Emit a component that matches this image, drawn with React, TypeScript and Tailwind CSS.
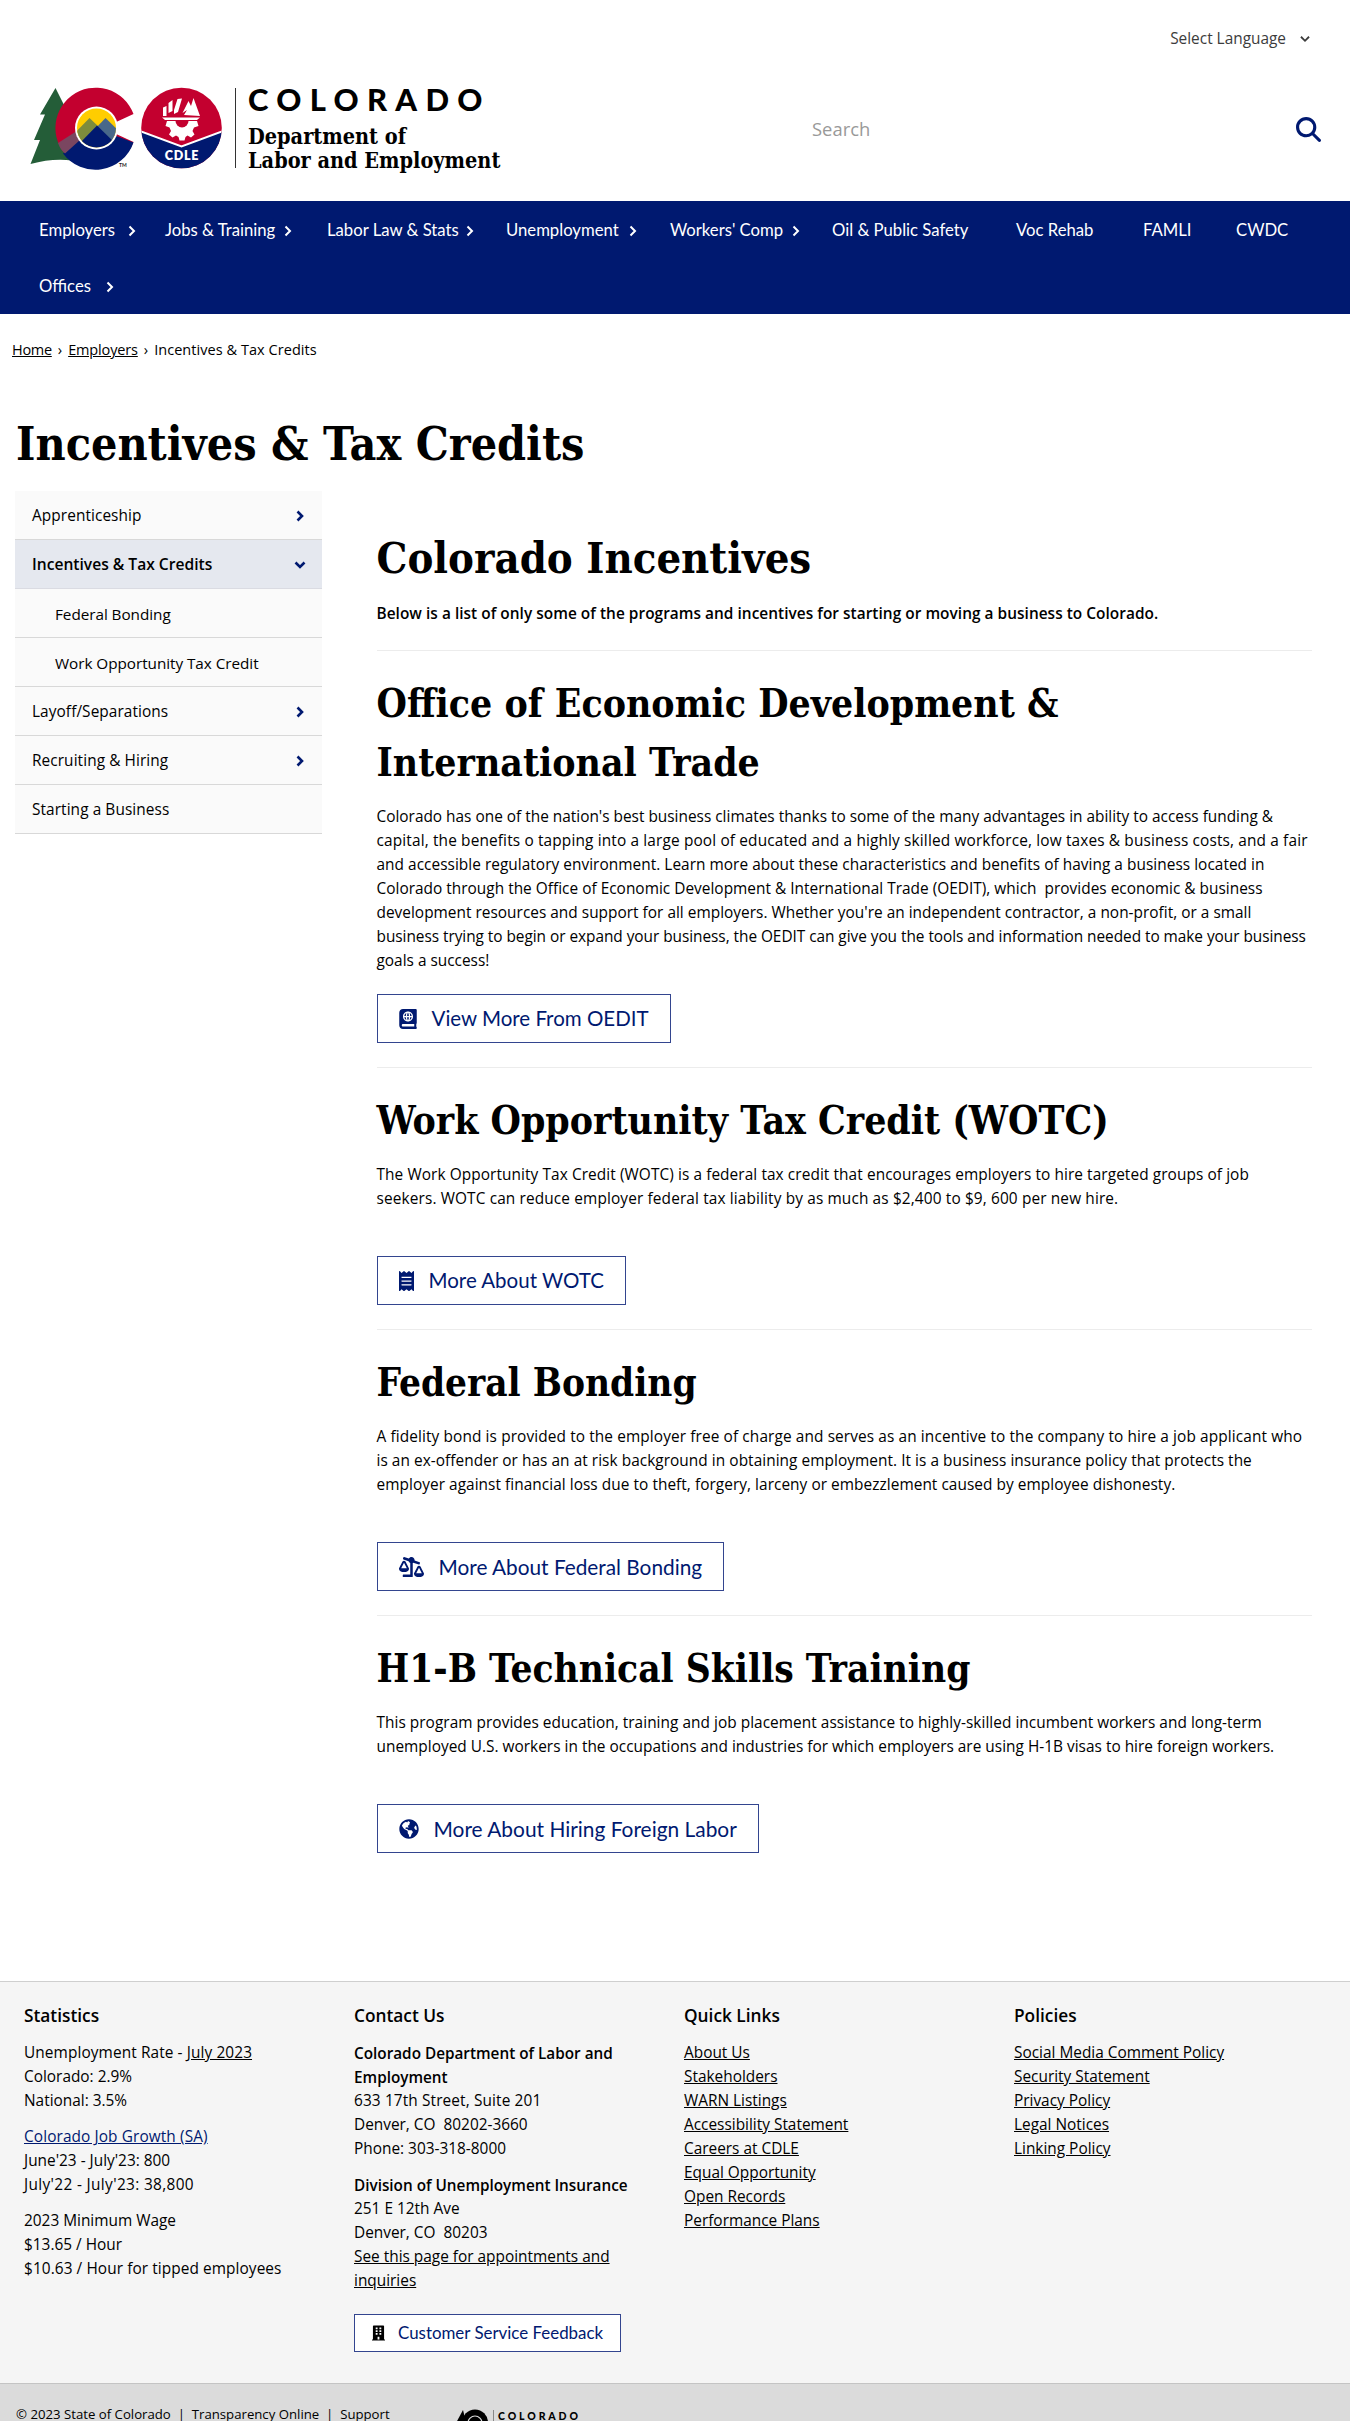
import React from "react";
import { FaAtlas, FaReceipt, FaBalanceScaleRight, FaGlobeAmericas, FaBuilding } from "react-icons/fa";
import { FaMagnifyingGlass } from "react-icons/fa6";

const SLAB = "font-['DejaVu_Serif_Condensed','DejaVu_Serif',serif]";
const MUSEO = "font-['Lato',sans-serif]";

function Chevron({ className = "", down = false }: { className?: string; down?: boolean }) {
  return (
    <svg
      viewBox="0 0 8 12"
      className={`h-[12px] w-[8px] shrink-0 ${down ? "rotate-90" : ""} ${className}`}
      fill="none"
      stroke="currentColor"
      strokeWidth="2"
    >
      <path d="M1.5 1.5 6 6 1.5 10.5" />
    </svg>
  );
}

function Emblem() {
  return (
    <svg viewBox="0 0 210 95" className="h-[95px] w-[210px] shrink-0">
      <defs>
        <clipPath id="sun">
          <circle cx="76.500" cy="48" r="19.500" />
        </clipPath>
        <clipPath id="badge">
          <circle cx="161.500" cy="48" r="40.300" />
        </clipPath>
      </defs>
      <path d="M35.500 8 48 33 54 77 52 80.500Q32 78 10.500 84L20 60H14L25 34.500H20Z" fill="#245d38" />
      <path d="M113.500 34A40.300 40.300 0 1 0 113.500 62L94 53V43Z" fill="#c3002f" />
      <path d="M43 73.500 76.500 44 95 55.500 113.500 62.500A40.300 40.300 0 0 1 43 73.500Z" fill="#001970" />
      <path d="M38 63 60 49 60 60 45 73.500Q40 69 38 63Z" fill="#7a4660" />
      <circle cx="76.500" cy="48" r="21.500" fill="#fff" />
      <g clipPath="url(#sun)">
        <rect x="55" y="26" width="43" height="44" fill="#ffcd00" />
        <path d="M50 58 69.500 38 80 48 66 66H50Z" fill="#7d8c3c" />
        <path d="M74 50 85.500 38 100 52V64H80Z" fill="#48688a" />
        <path d="M55 68 77 45.500 101 69Z" fill="#001970" />
      </g>
      <text x="99" y="86.500" fontSize="5" fontWeight="700" fontFamily="Lato, sans-serif" fill="#222">
        TM
      </text>
      <g clipPath="url(#badge)">
        <rect x="121" y="7" width="82" height="82" fill="#c3002f" />
        <path d="M121 51.500 161.500 66.500 202 51.500V90H121Z" fill="#001970" />
        <path d="M121 51.500 161.500 66.500 202 51.500" fill="none" stroke="#fff" strokeWidth="2" />
      </g>
      <path d="M142 37.500H180L177 40H145Z" fill="#fff" />
      <path
        d="M143 36V27.500L146.500 26V36ZM148.500 33V23L152.500 20V31ZM154 30 157.500 19 162 18.500 158 32 154 34ZM164 35 167 30 162.500 33 168.500 21 171 26 173.500 18 180 36Z"
        fill="#fff"
      />
      <path
        d="M147 41H177L178.500 46 174 47.500 172.500 51 174.500 54.500 171 57.500 167.500 55.500 165.500 57 164.500 60.500H159.500L158.500 57 156 55.500 152.500 57.500 149 54.500 151 51 149.500 47.500 145.500 46Z"
        fill="#fff"
      />
      <path d="M155.500 41H168.500A6.500 6.500 0 0 1 155.500 41Z" fill="#c3002f" />
      <text
        x="162"
        y="79.800"
        textAnchor="middle"
        fontSize="12.500"
        fontWeight="800"
        letterSpacing="0.8"
        fontFamily="Lato, sans-serif"
        fill="#fff"
      >
        CDLE
      </text>
    </svg>
  );
}

function Header() {
  return (
    <header className="h-[201px]">
      <div className="flex h-[80px] items-start justify-end pt-[27px] pr-[41px]">
        <span className="flex h-6 items-center text-[15.4px] text-[#3c3c3c]">
          Select Language
          <Chevron down className="ml-[15px] scale-90" />
        </span>
      </div>
      <div className="flex h-[121px] pl-5">
        <Emblem />
        <div className="mt-2 ml-[5px] h-[80px] w-px bg-[#333]" />
        <div className="ml-[12px] w-[540px] whitespace-nowrap text-black">
          <div className={`${MUSEO} h-[45px] text-[31px] leading-[39px] font-black tracking-[8.3px]`}>COLORADO</div>
          <div className={`${SLAB} text-[21.5px] leading-[23.5px] font-bold`}>
            Department of
            <br />
            Labor and Employment
          </div>
        </div>
        <div className="mt-[36px] flex h-[26px] w-[533px] items-center justify-between">
          <span className="pl-[24px] text-[18.4px] text-[#999]">Search</span>
          <FaMagnifyingGlass className="size-[25px] text-[#001970]" />
        </div>
      </div>
    </header>
  );
}

const NAV: [string, string, string | null][] = [
  ["Employers", "w-[126px]", "ml-[13px]"],
  ["Jobs & Training", "w-[162px]", "ml-[9px]"],
  ["Labor Law & Stats", "w-[179px]", "ml-[7px]"],
  ["Unemployment", "w-[164px]", "ml-[10px]"],
  ["Workers' Comp", "w-[162px]", "ml-[9px]"],
  ["Oil & Public Safety", "w-[184px]", null],
  ["Voc Rehab", "w-[127px]", null],
  ["FAMLI", "w-[93px]", null],
  ["CWDC", "w-[80px]", null],
  ["Offices", "w-[110px]", "ml-[15px]"],
];

function Nav() {
  return (
    <nav className={`${MUSEO} flex h-[113px] flex-wrap content-start bg-[#001970] pl-[39px] text-[16.7px] text-white`}>
      {NAV.map(([label, width, chevron]) => (
        <span key={label} className={`flex h-[56px] items-center pt-[3px] whitespace-nowrap ${width}`}>
          {label}
          {chevron && <Chevron className={`h-[11px] ${chevron}`} />}
        </span>
      ))}
    </nav>
  );
}

function Breadcrumb() {
  return (
    <div className="flex h-[100px] items-start pt-[24px] pl-[12px] text-[14.5px] leading-6">
      <a className="tracking-[-0.3px] underline">Home</a>
      <span className="mx-[6px]">›</span>
      <a className="tracking-[-0.15px] underline">Employers</a>
      <span className="mx-[6px]">›</span>
      <span className="tracking-[0.05px]">Incentives &amp; Tax Credits</span>
    </div>
  );
}

const SIDE: { label: string; kind: "top" | "sub" | "active"; more: boolean }[] = [
  { label: "Apprenticeship", kind: "top", more: true },
  { label: "Incentives & Tax Credits", kind: "active", more: true },
  { label: "Federal Bonding", kind: "sub", more: false },
  { label: "Work Opportunity Tax Credit", kind: "sub", more: false },
  { label: "Layoff/Separations", kind: "top", more: true },
  { label: "Recruiting & Hiring", kind: "top", more: true },
  { label: "Starting a Business", kind: "top", more: false },
];

const SIDE_STYLE = {
  top: "bg-[#fafafa] pl-[17px] border-[#d8d8d8] tracking-[0.08px] text-[15.4px]",
  sub: "bg-[#fafafa] pl-[40px] border-[#d8d8d8] tracking-[-0.05px] text-[15.3px]",
  active: "bg-[#e5e8ef] pl-[17px] font-semibold text-[15.6px] border-[#dadbe2]",
};

function Sidebar() {
  return (
    <aside className="mt-[17px] w-[307px] shrink-0">
      {SIDE.map((row) => (
        <div
          key={row.label}
          className={`flex h-[49px] items-center justify-between border-b pt-[2px] pr-[18px] whitespace-nowrap ${SIDE_STYLE[row.kind]}`}
        >
          {row.label}
          {row.more && <Chevron down={row.kind === "active"} className="text-[#001970] stroke-[2.6]" />}
        </div>
      ))}
    </aside>
  );
}

const SECTIONS: {
  title: string[];
  size: string;
  lines: [string, string][];
  icon: React.ReactNode;
  button: string;
  gap: string;
}[] = [
  {
    title: ["Office of Economic Development &", "International Trade"],
    size: "text-[38.8px]",
    lines: [
      ["Colorado has one of the nation's best business climates thanks to some of the many advantages in ability to access funding &", ""],
      [
        "capital, the benefits o tapping into a large pool of educated and a highly skilled workforce, low taxes & business costs, and a fair",
        "tracking-[0.145px]",
      ],
      [
        "and accessible regulatory environment. Learn more about these characteristics and benefits of having a business located in",
        "tracking-[0.04px]",
      ],
      [
        "Colorado through the Office of Economic Development & International Trade (OEDIT), which \u00a0provides economic & business",
        "tracking-[0.02px]",
      ],
      [
        "development resources and support for all employers. Whether you're an independent contractor, a non-profit, or a small",
        "tracking-[0.02px]",
      ],
      [
        "business trying to begin or expand your business, the OEDIT can give you the tools and information needed to make your business",
        "tracking-[-0.04px]",
      ],
      ["goals a success!", ""],
    ],
    icon: <FaAtlas className="h-[20px] w-[18px]" />,
    button: "View More From OEDIT",
    gap: "mt-[21px] text-[20.5px]",
  },
  {
    title: ["Work Opportunity Tax Credit (WOTC)"],
    size: "text-[38.8px]",
    lines: [
      [
        "The Work Opportunity Tax Credit (WOTC) is a federal tax credit that encourages employers to hire targeted groups of job",
        "tracking-[0.085px]",
      ],
      [
        "seekers. WOTC can reduce employer federal tax liability by as much as $2,400 to $9, 600 per new hire.",
        "tracking-[0.13px]",
      ],
    ],
    icon: <FaReceipt className="h-[20px] w-[15px]" />,
    button: "More About WOTC",
    gap: "mt-[45px] text-[20.5px]",
  },
  {
    title: ["Federal Bonding"],
    size: "text-[38.4px]",
    lines: [
      [
        "A fidelity bond is provided to the employer free of charge and serves as an incentive to the company to hire a job applicant who",
        "tracking-[0.11px]",
      ],
      [
        "is an ex-offender or has an at risk background in obtaining employment. It is a business insurance policy that protects the",
        "tracking-[0.05px]",
      ],
      [
        "employer against financial loss due to theft, forgery, larceny or embezzlement caused by employee dishonesty.",
        "tracking-[0.05px]",
      ],
    ],
    icon: <FaBalanceScaleRight className="h-[20px] w-[25px]" />,
    button: "More About Federal Bonding",
    gap: "mt-[45px] text-[20.8px]",
  },
  {
    title: ["H1-B Technical Skills Training"],
    size: "text-[38.5px]",
    lines: [
      [
        "This program provides education, training and job placement assistance to highly-skilled incumbent workers and long-term",
        "tracking-[0.04px]",
      ],
      [
        "unemployed U.S. workers in the occupations and industries for which employers are using H-1B visas to hire foreign workers.",
        "tracking-[0.015px]",
      ],
    ],
    icon: <FaGlobeAmericas className="h-[20px] w-[20px]" />,
    button: "More About Hiring Foreign Labor",
    gap: "mt-[45px] text-[20.9px]",
  },
];

function Content() {
  return (
    <section className="mt-[54px] ml-[54.5px] w-[935px] whitespace-nowrap">
      <h2 className={`${SLAB} text-[43.2px] leading-[59px] font-bold`}>Colorado Incentives</h2>
      <p className="mt-[15px] text-[15.4px] leading-6 font-semibold tracking-[0.04px]">
        Below is a list of only some of the programs and incentives for starting or moving a business to Colorado.
      </p>
      {SECTIONS.map((s) => (
        <div key={s.button} className="mt-[24px] border-t border-[#ececec] pt-[23px]">
          <h2 className={`${SLAB} ${s.size} leading-[59px] font-bold`}>
            {s.title.map((t) => (
              <span key={t} className="block">
                {t}
              </span>
            ))}
          </h2>
          <p className="mt-[13px] text-[15.4px] leading-6">
            {s.lines.map(([line, tracking]) => (
              <span key={line} className={`block ${tracking}`}>
                {line}
              </span>
            ))}
          </p>
          <a
            className={`${MUSEO} ${s.gap} flex h-[49px] w-fit items-center gap-[15px] border border-[#33458f] px-[21px] text-[#001970]`}
          >
            {s.icon}
            {s.button}
          </a>
        </div>
      ))}
    </section>
  );
}

function Links({ items }: { items: string[] }) {
  return (
    <ul>
      {items.map((t) => (
        <li key={t}>
          <a className="underline">{t}</a>
        </li>
      ))}
    </ul>
  );
}

function FootTitle({ children }: { children: React.ReactNode }) {
  return <h3 className="mb-[13px] text-[17.3px] leading-6 font-semibold">{children}</h3>;
}

function Footer() {
  return (
    <footer className="h-[402px] border-t border-[#cfcfcf] bg-[#f5f5f5] pt-[22px] text-[15.4px] leading-6">
      <div className="grid grid-cols-[330px_330px_330px_1fr] pl-6 whitespace-nowrap">
        <div>
          <FootTitle>Statistics</FootTitle>
          <p>
            <span className="tracking-[0.1px]">
              Unemployment Rate - <a className="underline">July 2023</a>
            </span>
            <br />
            Colorado: 2.9%
            <br />
            National: 3.5%
          </p>
          <p className="mt-3">
            <a className="tracking-[0.1px] text-[#001970] underline">Colorado Job Growth (SA)</a>
            <br />
            June'23 - July'23: 800
            <br />
            <span className="tracking-[0.35px]">July'22 - July'23: 38,800</span>
          </p>
          <p className="mt-3">
            2023 Minimum Wage
            <br />
            $13.65 / Hour
            <br />
            <span className="tracking-[0.08px]">$10.63 / Hour for tipped employees</span>
          </p>
        </div>
        <div>
          <FootTitle>Contact Us</FootTitle>
          <b className="block text-[15.3px] font-semibold">
            Colorado Department of Labor and
            <br />
            Employment
          </b>
          <p>
            <span className="tracking-[0.12px]">633 17th Street, Suite 201</span>
            <br />
            Denver, CO &nbsp;80202-3660
            <br />
            Phone: 303-318-8000
          </p>
          <b className="mt-3 block text-[15.3px] font-semibold">Division of Unemployment Insurance</b>
          <p>
            251 E 12th Ave
            <br />
            Denver, CO &nbsp;80203
            <br />
            <a className="underline">
              See this page for appointments and
              <br />
              inquiries
            </a>
          </p>
          <a
            className={`${MUSEO} mt-[21px] flex h-[38px] w-fit items-center gap-[13px] border border-[#33458f] bg-white px-[17px] text-[16.9px] text-[#001970]`}
          >
            <FaBuilding className="h-[16px] w-[13px] text-black" />
            Customer Service Feedback
          </a>
        </div>
        <div>
          <FootTitle>Quick Links</FootTitle>
          <Links
            items={[
              "About Us",
              "Stakeholders",
              "WARN Listings",
              "Accessibility Statement",
              "Careers at CDLE",
              "Equal Opportunity",
              "Open Records",
              "Performance Plans",
            ]}
          />
        </div>
        <div>
          <FootTitle>Policies</FootTitle>
          <Links
            items={["Social Media Comment Policy", "Security Statement", "Privacy Policy", "Legal Notices", "Linking Policy"]}
          />
        </div>
      </div>
    </footer>
  );
}

function BottomBar() {
  return (
    <div className="flex h-[38px] overflow-hidden border-t border-[#c4c4c4] bg-[#dbdbdb] pl-4 whitespace-nowrap">
      <div className="w-[440px] pt-[21px] text-[13.2px] leading-[18px]">
        © 2023 State of Colorado &nbsp;|&nbsp; Transparency Online &nbsp;|&nbsp; Support
      </div>
      <svg viewBox="0 0 34 20" className="mt-[25px] h-[20px] w-[34px] shrink-0">
        <path d="M0 14 7 1 9 9 6 16Z" fill="#000" />
        <circle cx="19" cy="13.500" r="13" fill="#000" />
        <circle cx="19" cy="14" r="7" fill="none" stroke="#dbdbdb" strokeWidth="1.200" />
      </svg>
      <div className="mt-[26px] ml-[3px] h-4 w-px shrink-0 bg-[#888]" />
      <div className={`${MUSEO} mt-[26px] ml-[4px] text-[10.5px] leading-[12px] font-black tracking-[2.9px]`}>COLORADO</div>
    </div>
  );
}

export default function App() {
  return (
    <div className="h-[2421px] w-[1350px] overflow-hidden bg-white font-['Open_Sans',sans-serif] text-black">
      <Header />
      <Nav />
      <Breadcrumb />
      <main className="h-[1567px] pl-[15px]">
        <h1 className={`${SLAB} pl-px text-[46.2px] leading-[60px] font-bold`}>Incentives &amp; Tax Credits</h1>
        <div className="flex">
          <Sidebar />
          <Content />
        </div>
      </main>
      <Footer />
      <BottomBar />
    </div>
  );
}
